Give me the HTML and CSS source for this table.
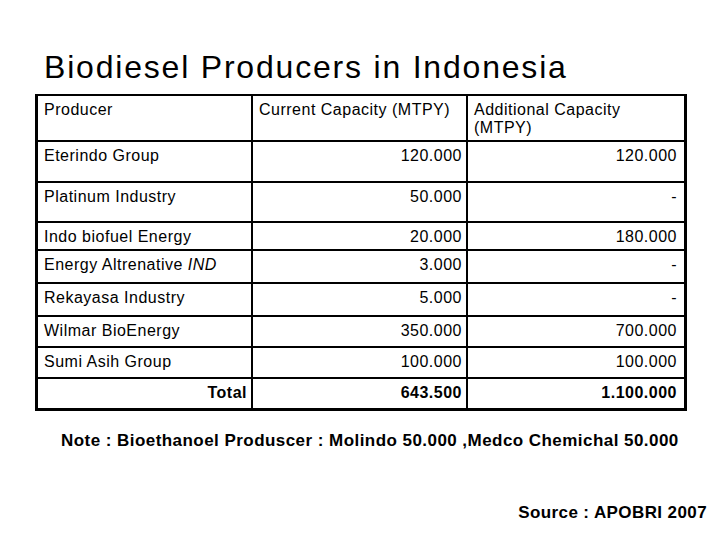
FILE: index.html
```html
<!DOCTYPE html>
<html lang="en">
<head>
    <meta charset="UTF-8">
    <title>Biodiesel Producers in Indonesia</title>
    <link rel="stylesheet" href="styles.css">
</head>
<body>

<div class="slide">
    <h1 class="title">Biodiesel Producers in Indonesia</h1>

    <table class="producers">
        <tr class="head">
            <td>Producer</td>
            <td>Current Capacity (MTPY)</td>
            <td>Additional Capacity<br>(MTPY)</td>
        </tr>
        <tr class="tall first">
            <td>Eterindo Group</td>
            <td class="num">120.000</td>
            <td class="num">120.000</td>
        </tr>
        <tr class="tall">
            <td>Platinum Industry</td>
            <td class="num">50.000</td>
            <td class="num">-</td>
        </tr>
        <tr class="short">
            <td>Indo biofuel Energy</td>
            <td class="num">20.000</td>
            <td class="num">180.000</td>
        </tr>
        <tr class="mid">
            <td>Energy Altrenative <i>IND</i></td>
            <td class="num">3.000</td>
            <td class="num">-</td>
        </tr>
        <tr class="mid">
            <td>Rekayasa Industry</td>
            <td class="num">5.000</td>
            <td class="num">-</td>
        </tr>
        <tr>
            <td>Wilmar BioEnergy</td>
            <td class="num">350.000</td>
            <td class="num">700.000</td>
        </tr>
        <tr>
            <td>Sumi Asih Group</td>
            <td class="num">100.000</td>
            <td class="num">100.000</td>
        </tr>
        <tr class="total">
            <td class="num">Total</td>
            <td class="num">643.500</td>
            <td class="num">1.100.000</td>
        </tr>
    </table>

    <p class="note">Note : Bioethanoel Produscer : Molindo 50.000 ,Medco Chemichal 50.000</p>
    <p class="source">Source : APOBRI 2007</p>
</div>

</body>
</html>
```

FILE: styles.css
```css
/* Slide layout */
body {
    margin: 0;
    background: #fff;
    color: #000;
    font-family: "Liberation Sans", Arial, sans-serif;
}
.slide {
    width: 720px;
    height: 540px;
    padding: 49px 0 0 35px;
    box-sizing: border-box;
}
.title {
    margin: 0 0 9px 9px;
    font-size: 32px;
    font-weight: normal;
    line-height: 36px;
    letter-spacing: 1.8px;
}

/* Table */
.producers {
    border-collapse: collapse;
    font-size: 16px;
    letter-spacing: 0.5px;
    border-left: 3px solid #000;
    border-right: 3px solid #000;
    border-bottom: 3px solid #000;
    border-top: 2px solid #000;
}
.producers td {
    border: 2px solid #000;
    padding: 5px 6px 0 6px;
    vertical-align: top;
    line-height: 18px;
    height: 24px;
}
.producers td:nth-child(1) { width: 201px; }
.producers td:nth-child(2) { width: 201px; }
.producers td:nth-child(3) { width: 203px; padding-right: 7px; }
.producers tr.head td { height: 39px; }
.producers tr.tall td { height: 33px; }
.producers tr.tall.first td { height: 34px; }
.producers tr.short td { height: 21px; }
.producers tr.mid td { height: 26px; }
.producers td.num {
    text-align: right;
    padding-right: 4px;
}
.producers td.num:nth-child(3) {
    padding-right: 7px;
}
.producers tr.total td {
    font-weight: bold;
}

/* Notes under the table */
.note {
    margin: 20px 0 0 26px;
    font-size: 17px;
    font-weight: bold;
    letter-spacing: 0.45px;
}
.source {
    margin: 52px 13px 0 0;
    text-align: right;
    font-size: 17px;
    font-weight: bold;
    letter-spacing: 0.4px;
}
```
